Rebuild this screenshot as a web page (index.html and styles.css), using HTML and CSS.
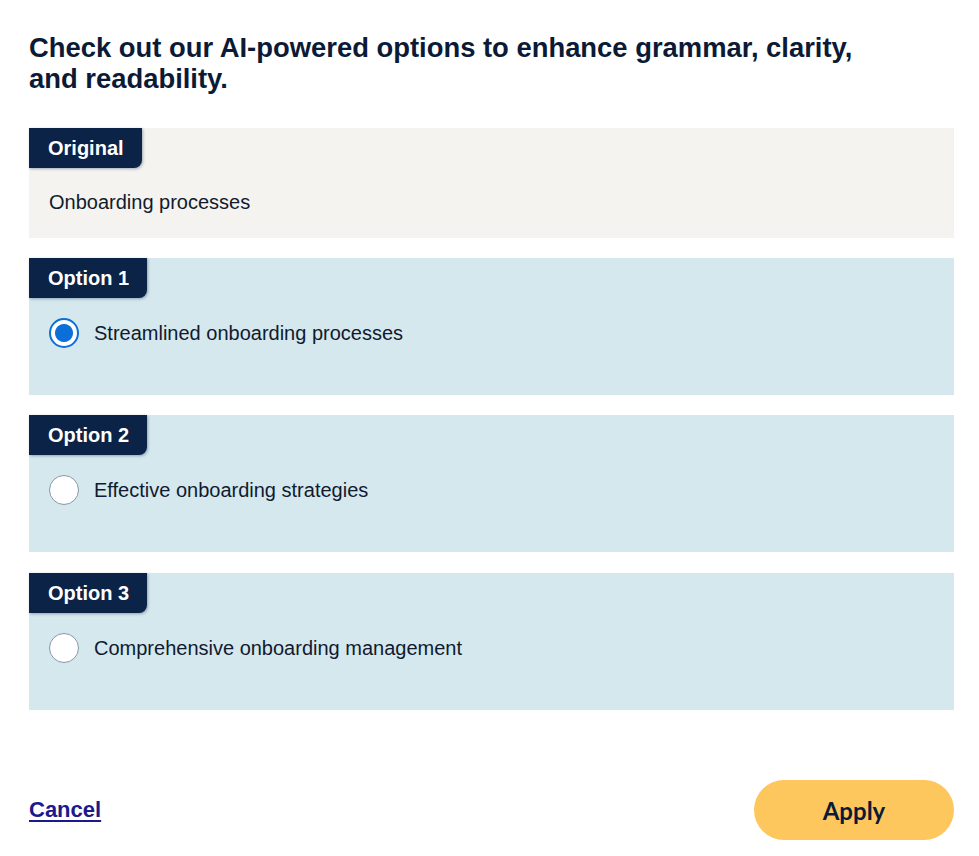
FILE: index.html
```html
<!DOCTYPE html>
<html lang="en">
<head>
<meta charset="utf-8">
<title>AI options</title>
<link rel="stylesheet" href="styles.css">
</head>
<body>
<main class="dialog">
  <h1 class="title">Check out our AI-powered options to enhance grammar, clarity, and readability.</h1>
  <section class="card card-original">
    <div class="tag">Original</div>
    <p class="original-text">Onboarding processes</p>
  </section>
  <label class="card card-option">
    <div class="tag">Option 1</div>
    <span class="choice">
      <input type="radio" name="opt" class="radio" checked>
      <span class="choice-text">Streamlined onboarding processes</span>
    </span>
  </label>
  <label class="card card-option">
    <div class="tag">Option 2</div>
    <span class="choice">
      <input type="radio" name="opt" class="radio">
      <span class="choice-text">Effective onboarding strategies</span>
    </span>
  </label>
  <label class="card card-option card-last">
    <div class="tag">Option 3</div>
    <span class="choice">
      <input type="radio" name="opt" class="radio">
      <span class="choice-text">Comprehensive onboarding management</span>
    </span>
  </label>
  <footer class="actions">
    <a href="#" class="cancel">Cancel</a>
    <button type="button" class="apply">Apply</button>
  </footer>
</main>
</body>
</html>
```
FILE: styles.css
```css
* { box-sizing: border-box; }
html, body { margin: 0; padding: 0; background: #ffffff; }
body { font-family: "Liberation Sans", Arial, sans-serif; color: #0b1a36; }

.dialog {
  width: 979px;
  padding: 32px 25px 0 29px;
  display: flex;
  flex-direction: column;
}

.title {
  margin: 0 0 34px 0;
  font-size: 27.4px;
  line-height: 31px;
  font-weight: 700;
  color: #0b1a36;
  max-width: 860px;
}

.card {
  display: flex;
  flex-direction: column;
  align-items: flex-start;
}

.card-original {
  background: #f4f3ef;
  height: 110px;
}

.card-option {
  background: #d4e8ee;
  height: 137px;
  margin-top: 20px;
  cursor: pointer;
}

.card-last {
  margin-top: 21px;
}

.tag {
  height: 40px;
  padding: 0 18px 0 19px;
  background: #0a2347;
  color: #ffffff;
  font-weight: 700;
  font-size: 20px;
  line-height: 40px;
  border-bottom-right-radius: 8px;
  box-shadow: 1px 1px 3px rgba(10, 35, 71, 0.35);
}

.original-text {
  margin: 21px 0 0 20px;
  font-size: 20px;
  line-height: 26px;
  color: #111a2e;
}

.choice {
  display: flex;
  align-items: center;
  gap: 15px;
  margin: 20px 0 0 20px;
}

.radio {
  appearance: none;
  -webkit-appearance: none;
  margin: 0;
  width: 30px;
  height: 30px;
  border-radius: 50%;
  border: 1px solid #8a96a8;
  background: #ffffff;
  flex: none;
}

.radio:checked {
  border: 2px solid #0b6fd9;
  background: radial-gradient(circle, #0b6fd9 0 8.5px, #ffffff 9.5px);
}

.choice-text {
  font-size: 20px;
  line-height: 26px;
  color: #111a2e;
}

.actions {
  display: flex;
  justify-content: space-between;
  align-items: center;
  margin-top: 70px;
}

.cancel {
  font-weight: 700;
  font-size: 22px;
  color: #1a1a8c;
  text-decoration: underline;
  text-underline-offset: 3px;
  text-decoration-thickness: 2px;
}

.apply {
  width: 200px;
  height: 60px;
  border: none;
  border-radius: 30px;
  background: #fec75d;
  font-family: Lato, "Liberation Sans", sans-serif;
  font-weight: 700;
  font-size: 24px;
  color: #0b1a36;
  cursor: pointer;
}
```
